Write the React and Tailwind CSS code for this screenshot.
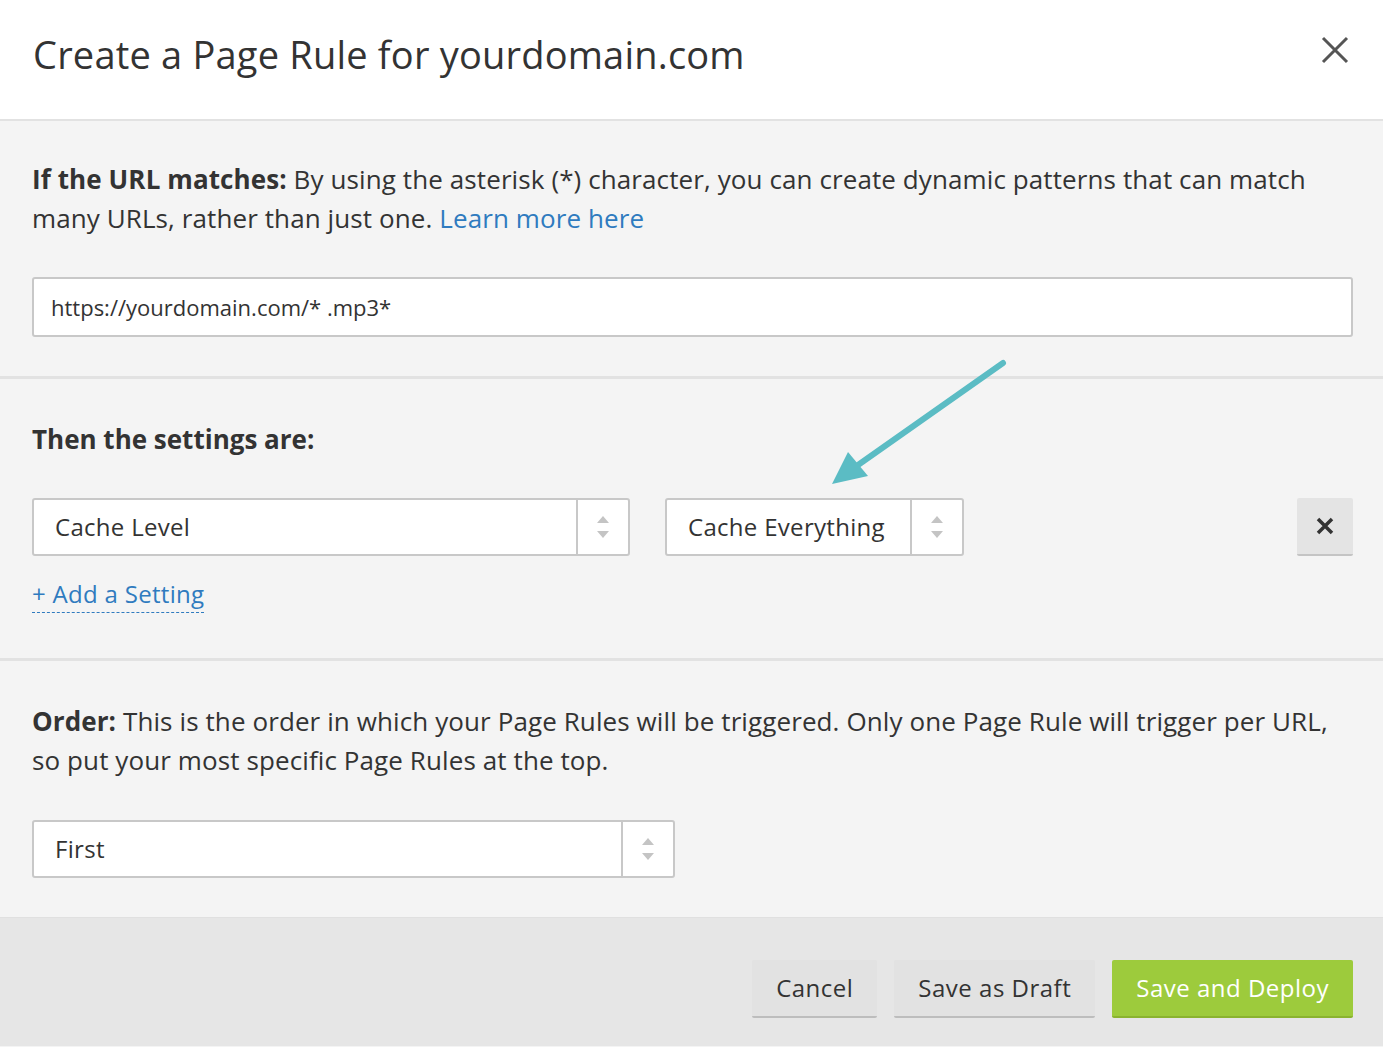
const Arrows = () => (
  <svg width="14" height="26" viewBox="0 0 14 26" className="block">
    <path d="M7 2 L13 9 H1 Z" fill="#c4c4c4" />
    <path d="M7 24 L13 17 H1 Z" fill="#c4c4c4" />
  </svg>
);

const Select = ({ label, w, textW }) => (
  <div className={`flex h-[58px] bg-white border-2 border-[#c8c8c8] rounded-[3px] ${w}`}>
    <div className={`flex items-center px-[21px] text-[24px] text-[#333] tracking-[0.3px] ${textW}`}>{label}</div>
    <div className="w-[52px] border-l-2 border-[#c8c8c8] flex items-center justify-center"><Arrows /></div>
  </div>
);

export default function App() {
  return (
    <div className="w-[1383px] h-[1047px] relative bg-[#f4f4f4] text-[#333]" style={{ fontFamily: '"Open Sans", sans-serif' }}>
      <div className="h-[121px] bg-white border-b-2 border-[#e2e2e2] flex items-center justify-between pl-[33px] pr-[34px]">
        <h1 className="text-[38px] tracking-[0.2px] text-[#333] -mt-[10px]">Create a Page Rule for yourdomain.com</h1>
        <svg width="28" height="28" viewBox="0 0 28 28" className="-mt-[20px]"><path d="M2 2 L26 26 M26 2 L2 26" stroke="#555" strokeWidth="3" /></svg>
      </div>
      <div className="h-[258px] border-b-[3px] border-[#e2e2e2] pl-[32px] pr-[30px] pt-[39px]">
        <p className="text-[26px] leading-[39px] tracking-[0.1px]"><b>If the URL matches:</b> By using the asterisk (*) character, you can create dynamic patterns that can match many URLs, rather than just one. <span className="text-[#2f7bbf]">Learn more here</span></p>
        <div className="mt-[39px] h-[60px] bg-white border-2 border-[#c8c8c8] rounded-[3px] flex items-center px-[17px] text-[22px]">https://yourdomain.com/* .mp3*</div>
      </div>
      <div className="h-[282px] border-b-[3px] border-[#e2e2e2] pl-[32px] pr-[30px] pt-[41px]">
        <p className="text-[26px] font-bold leading-[39px]">Then the settings are:</p>
        <div className="mt-[39px] flex items-center">
          <Select label="Cache Level" w="w-[598px]" textW="flex-1" />
          <div className="ml-[35px]"><Select label="Cache Everything" w="w-[299px]" textW="flex-1" /></div>
          <div className="ml-auto w-[56px] h-[58px] bg-[#e4e4e4] border-b-2 border-[#c4c4c4] rounded-[2px] flex items-center justify-center">
            <svg width="18" height="18" viewBox="0 0 18 18"><path d="M2 2 L16 16 M16 2 L2 16" stroke="#333" strokeWidth="3.5" /></svg>
          </div>
        </div>
        <div className="mt-[20px] inline-block text-[24px] text-[#2f7bbf] border-b border-dashed border-[#2f7bbf] leading-[36px] tracking-[0.3px]">+ Add a Setting</div>
      </div>
      <div className="h-[257px] border-b border-[#e0e0e0] pl-[32px] pr-[30px] pt-[41px]">
        <p className="text-[26px] leading-[39px] tracking-[0.1px]"><b>Order:</b> This is the order in which your Page Rules will be triggered. Only one Page Rule will trigger per URL, so put your most specific Page Rules at the top.</p>
        <div className="mt-[40px]"><Select label="First" w="w-[643px]" textW="flex-1" /></div>
      </div>
      <div className="h-[128px] bg-[#e6e6e6] flex items-start justify-end gap-[17px] pr-[30px] pt-[42px]">
        <button className="h-[58px] px-[24px] bg-[#e2e2e2] border-b-2 border-[#bdbdbd] rounded-[2px] text-[24px] tracking-[0.5px] text-[#333]">Cancel</button>
        <button className="h-[58px] px-[24px] bg-[#e2e2e2] border-b-2 border-[#bdbdbd] rounded-[2px] text-[24px] tracking-[0.5px] text-[#333]">Save as Draft</button>
        <button className="h-[58px] px-[24px] bg-[#9dcb3c] border-b-2 border-[#8ab32f] rounded-[2px] text-[24px] tracking-[0.5px] text-white">Save and Deploy</button>
      </div>
      <svg className="absolute left-0 top-0 pointer-events-none" width="1383" height="1047">
        <line x1="1003" y1="363" x2="858" y2="465" stroke="#5bbcc4" strokeWidth="6" strokeLinecap="round" />
        <path d="M832 484 L848 452 L868 476 Z" fill="#5bbcc4" />
      </svg>
    </div>
  );
}
